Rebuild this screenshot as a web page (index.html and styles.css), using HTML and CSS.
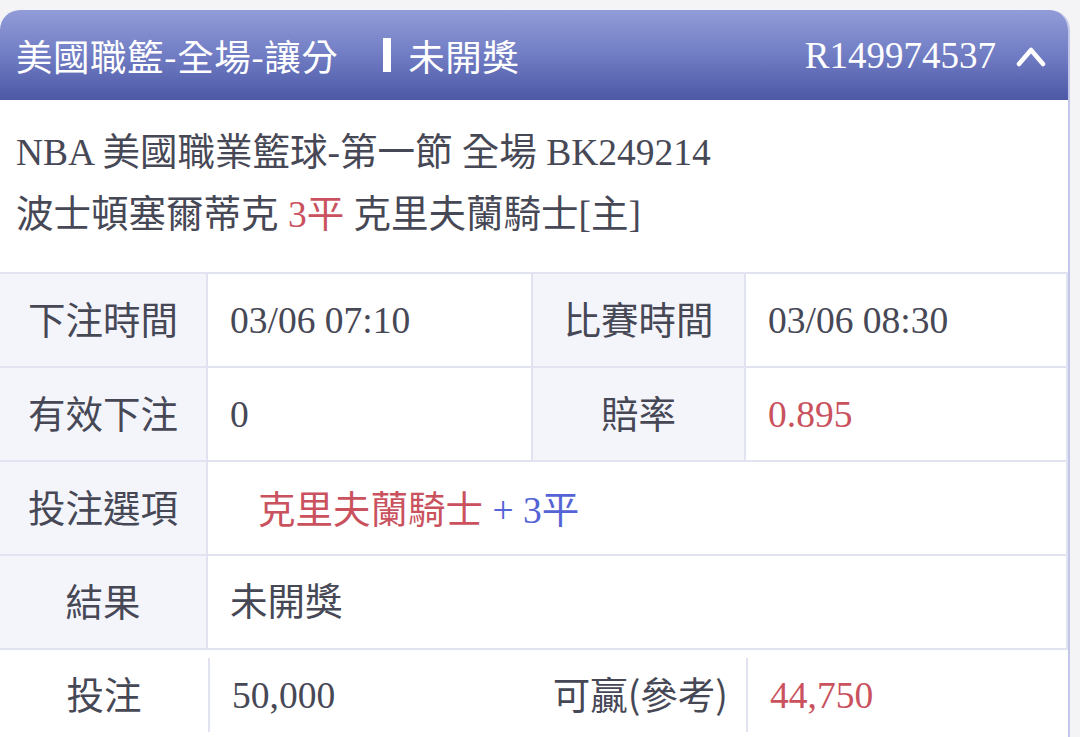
FILE: index.html
```html
<!DOCTYPE html>
<html lang="zh-Hant">
<head>
  <meta charset="UTF-8">
  <meta name="viewport" content="width=device-width, initial-scale=1.0">
  <title>注單詳情</title>
  <link rel="stylesheet" href="styles.css">
</head>
<body>
  <div class="card">
    <div class="card-head">
      <div class="head-title">
        <span>美國職籃-全場-讓分</span>
        <span class="bar"></span>
        <span>未開獎</span>
      </div>
      <div class="head-right">
        <span class="order-no">R149974537</span>
        <svg class="chevron" width="30" height="22" viewBox="0 0 30 22">
          <polyline points="3,19 15,5 27,19" fill="none" stroke="#fff" stroke-width="4.5" stroke-linecap="round" stroke-linejoin="round"/>
        </svg>
      </div>
    </div>

    <div class="info">
      <div>NBA 美國職業籃球-第一節 全場 BK249214</div>
      <div>波士頓塞爾蒂克 <span class="red">3平</span> 克里夫蘭騎士[主]</div>
    </div>

    <div class="grid">
      <div class="label">下注時間</div>
      <div class="value">03/06 07:10</div>
      <div class="label">比賽時間</div>
      <div class="value">03/06 08:30</div>

      <div class="label">有效下注</div>
      <div class="value">0</div>
      <div class="label">賠率</div>
      <div class="value red">0.895</div>

      <div class="label">投注選項</div>
      <div class="value wide pick"><span><span class="red">克里夫蘭騎士</span> <span class="blue">+ 3平</span></span></div>

      <div class="label">結果</div>
      <div class="value wide cjk">未開獎</div>
    </div>

    <div class="foot">
      <div class="f-label">投注</div>
      <div class="f-value">50,000</div>
      <div class="f-label right">可贏(參考)</div>
      <div class="f-value red">44,750</div>
    </div>
  </div>
</body>
</html>
```

FILE: styles.css
```css
body { margin: 0; padding: 10px 10px 0 0; background-color: #f4f4f6; font-family: "Liberation Serif", "Noto Sans CJK TC", serif; color: #474856; font-size: 37.5px; overflow: hidden; }
.card { background-color: #fff; border-right: 2px solid #c4c8e8; border-radius: 20px 20px 20px 0; overflow: hidden; height: 760px; }
.card-head { height: 90px; display: flex; align-items: center; justify-content: space-between; padding: 0 22px 0 16px; background: linear-gradient(to bottom, #929cd9 0%, #7480c6 45%, #4d58a6 100%); color: #fff; font-family: "Noto Sans CJK TC", sans-serif; }
.head-title { display: flex; align-items: center; font-size: 36.5px; letter-spacing: 0.5px; }
.bar { display: inline-block; width: 8px; height: 34px; background-color: #fff; margin: 0 17px 0 45px; }
.head-right { display: flex; align-items: center; gap: 20px; }
.order-no { font-family: "Liberation Serif", serif; font-size: 37px; }
.chevron { margin-top: 2px; }
.info { padding: 22px 16px 26px; line-height: 62px; }
.grid { display: grid; grid-template-columns: 208px 325px 213px 1fr; border-top: 2px solid #e1e3f1; }
.grid > div { display: flex; align-items: center; border-bottom: 2px solid #e1e3f1; border-right: 2px solid #e1e3f1; box-sizing: border-box; height: 94px; }
.label { justify-content: center; background-color: #f4f5fb; font-family: "Noto Sans CJK TC", sans-serif; padding-bottom: 6px; }
.value { padding-left: 22px; background-color: #fff; }
.wide { grid-column: span 3; }
.pick { padding-left: 50px; padding-bottom: 4px; }
.cjk { padding-bottom: 8px; }
.red { color: #c9525e; }
.blue { color: #5463d6; }
.foot { display: grid; grid-template-columns: 208px 325px 213px 1fr; align-items: center; padding-top: 8px; }
.foot > div { height: 74px; display: flex; align-items: center; }
.f-label { justify-content: center; font-family: "Noto Sans CJK TC", sans-serif; padding-bottom: 6px; box-sizing: border-box; }
.f-label.right { justify-content: flex-end; padding-right: 18px; }
.f-value { padding-left: 22px; border-left: 2px solid #e1e3f1; }
```
